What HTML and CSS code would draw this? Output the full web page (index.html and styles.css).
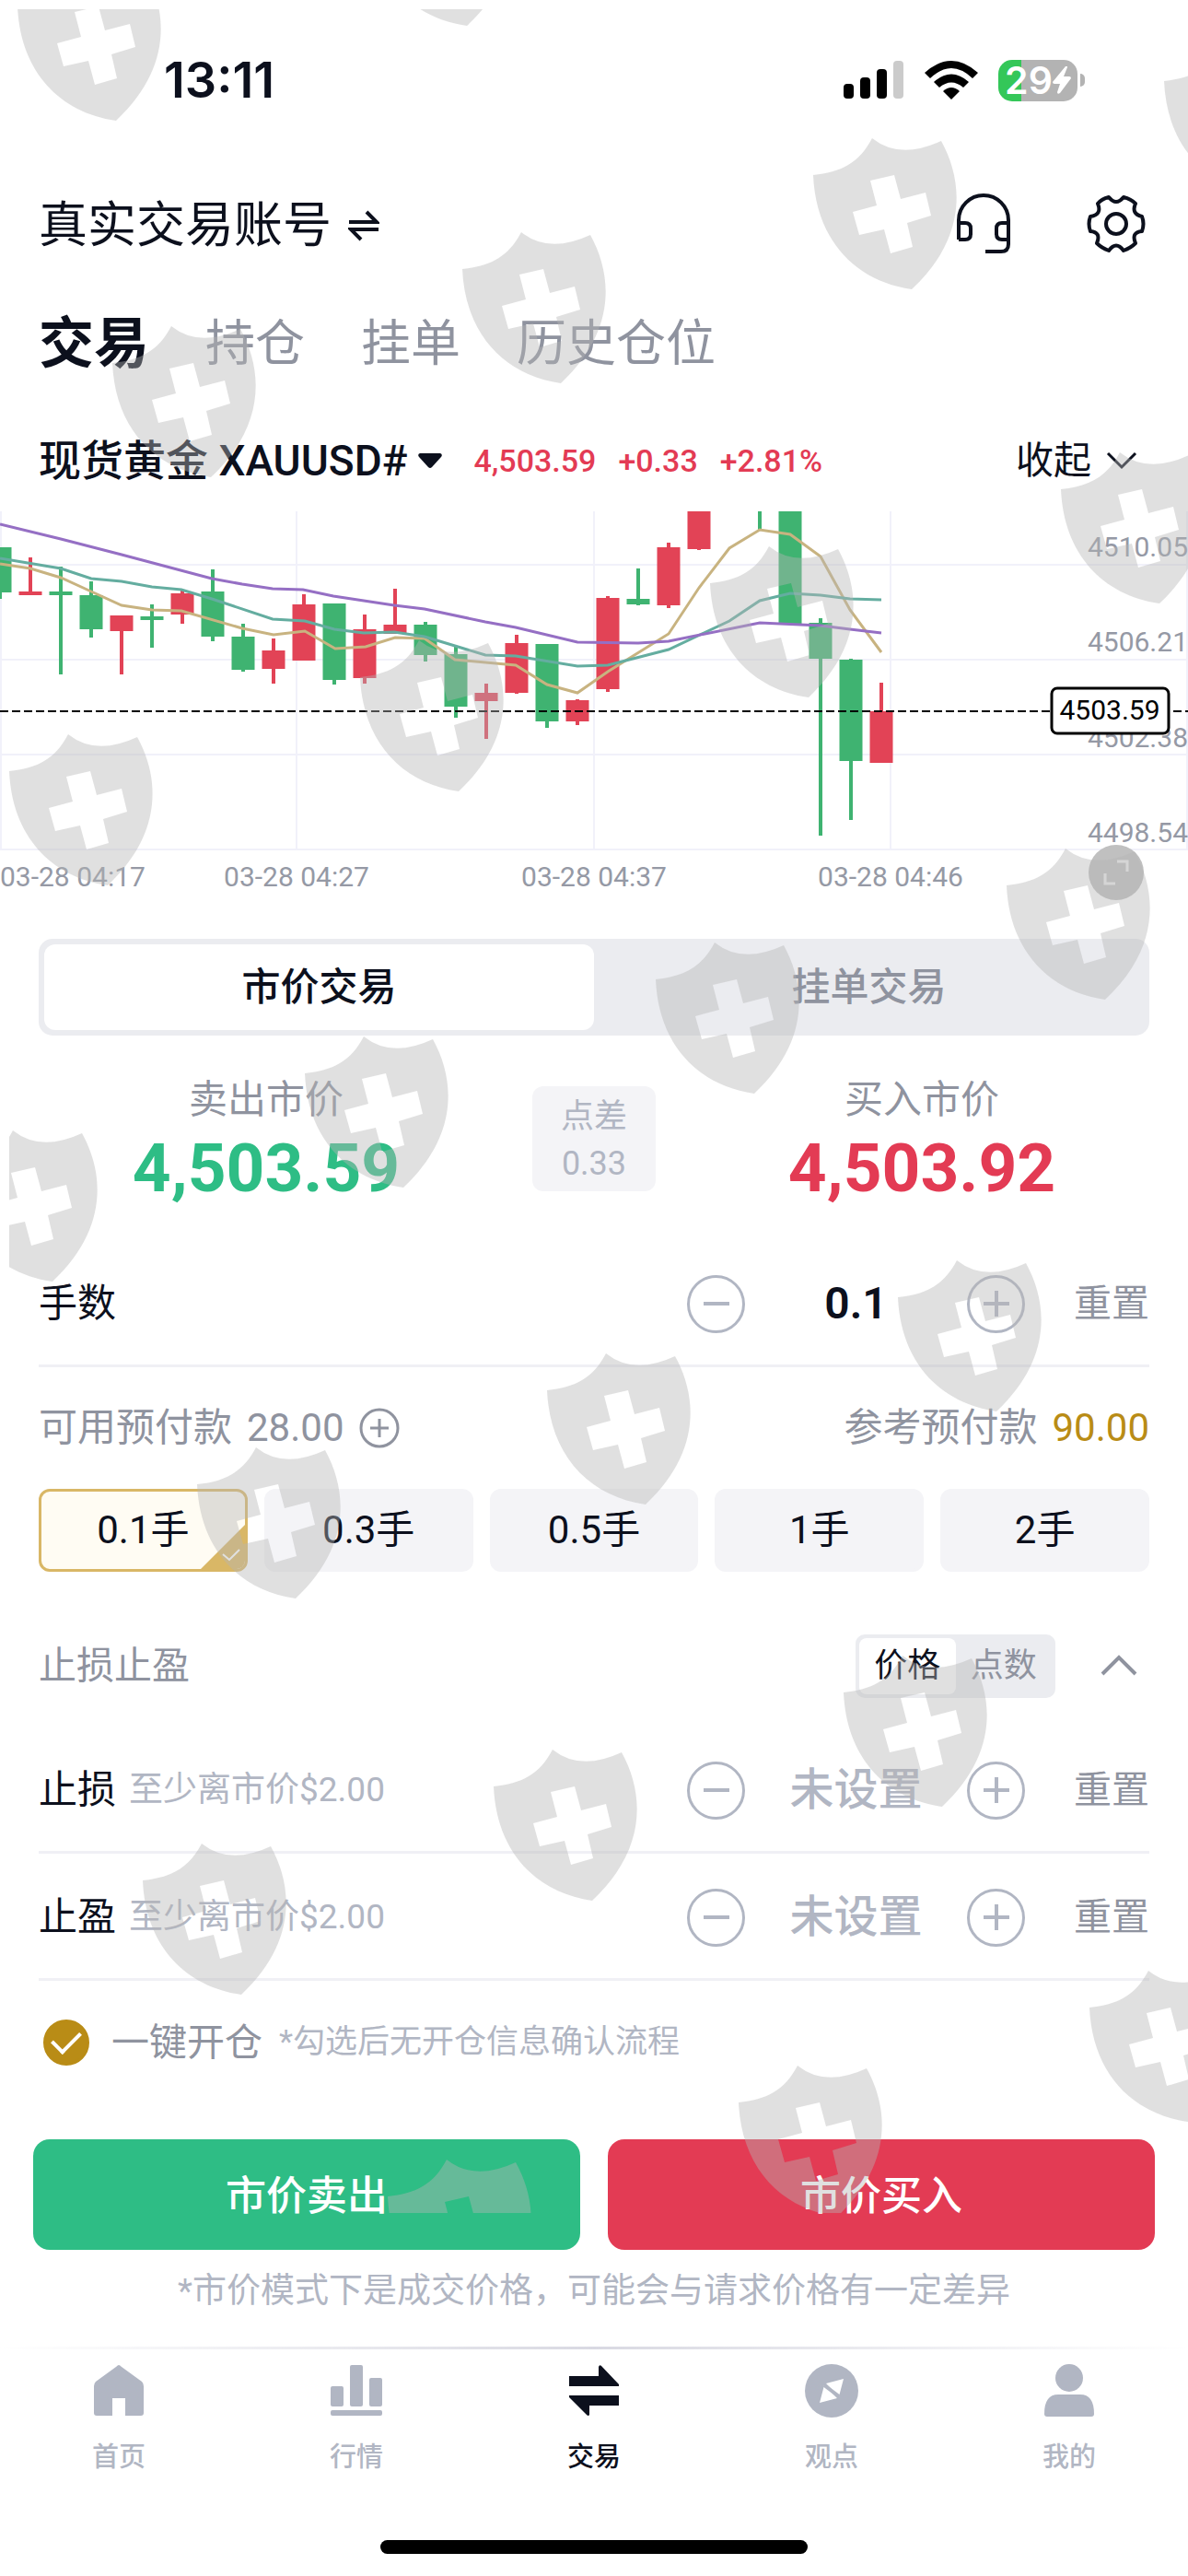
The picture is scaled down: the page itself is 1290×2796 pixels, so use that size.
FILE: index.html
```html
<!DOCTYPE html>
<html lang="zh-CN">
<head>
  <meta charset="UTF-8">
  <meta name="viewport" content="width=device-width, initial-scale=1">
  <title>交易</title>
  <link rel="stylesheet" href="styles.css">
</head>
<body>
  <div class="app">
    <div class="status-bar">
      <span class="time">13:11</span>
      <div class="status-icons">
        <svg width="66" height="42" viewBox="0 0 66 42">
          <rect x="0" y="25" width="11" height="16" rx="4" />
          <rect x="18" y="18" width="11" height="23" rx="4" />
          <rect x="36" y="9" width="11" height="32" rx="4" />
          <rect x="54" y="0" width="11" height="41" rx="4" fill="#cbcbcb" />
        </svg>
        <svg width="58" height="42" viewBox="0 0 58 42">
          <path d="M29 42 L20 33 Q29 25 38 33 Z" />
          <path d="M10 23 Q29 6 48 23 L42 29 Q29 18 16 29 Z" />
          <path d="M0 13 Q29 -13 58 13 L52 19 Q29 -3 6 19 Z" />
        </svg>
        <div class="battery"><span>29</span><svg width="20" height="30" viewBox="0 0 20 30"><path d="M14 0 L0 17 Q0 19 2 19 H8 L5 28 Q5 31 8 29 L20 13 Q20 11 18 11 H12 L16 1 Q16 -1 14 0 Z" fill="#fff" /></svg></div>
      </div>
    </div>

    <header class="account">
      <button class="account-name">真实交易账号
        <svg width="34" height="34" viewBox="0 0 34 34" fill="none" stroke="currentColor" stroke-width="4">
          <path d="M1 13 H31 L20 2" />
          <path d="M33 21 H3 L14 32" />
        </svg>
      </button>
      <div class="account-tools">
        <button aria-label="客服">
          <svg width="72" height="72" viewBox="0 0 72 72" fill="none" stroke="currentColor" stroke-width="4">
            <path d="M9 53 V32 a27 27 0 0 1 54 0 V58 q0 8 -8 8 H38" />
            <path d="M9 35 h7 q6 0 6 6 v6 q0 6 -6 6 h-7" />
            <path d="M63 35 h-7 q-6 0 -6 6 v6 q0 6 6 6 h7" />
          </svg>
        </button>
        <button aria-label="设置">
          <svg width="72" height="72" viewBox="0 0 72 72" fill="none" stroke="currentColor" stroke-width="4" stroke-linejoin="round">
            <path d="M28 7 Q20 9 16 14 Q21 26 8 28 Q5 36 8 44 Q20 45 15 57 Q20 62 28 65 Q36 54 44 65 Q52 62 57 57 Q52 45 64 44 Q67 36 64 28 Q52 25 57 14 Q52 9 44 7 Q36 17 28 7 Z" />
            <circle cx="36" cy="36" r="11" />
          </svg>
        </button>
      </div>
    </header>

    <nav class="tabs">
      <a href="#trade" class="active">交易</a>
      <a href="#positions">持仓</a>
      <a href="#orders">挂单</a>
      <a href="#history">历史仓位</a>
    </nav>

    <div class="symbol-row">
      <button class="symbol">现货黄金 XAUUSD#
        <svg width="26" height="16" viewBox="0 0 26 16"><path d="M2 0 H24 Q27 1 25 4 L15 15 Q13 17 11 15 L1 4 Q-1 1 2 0 Z" fill="currentColor" /></svg>
      </button>
      <div class="change"><span>4,503.59</span><span>+0.33</span><span>+2.81%</span></div>
      <button class="collapse">收起
        <svg width="36" height="24" viewBox="0 0 36 24" fill="none" stroke="currentColor" stroke-width="3"><path d="M3 4 L18 19 L33 4" /></svg>
      </button>
    </div>

    <div class="chart">
      <svg viewBox="0 0 1290 415">
        <g class="grid">
          <path d="M1 0 V367 M322 0 V367 M645 0 V367 M967 0 V367 M1289 0 V367" />
          <path d="M0 58 H1290 M0 161 H1290 M0 264 H1290 M0 367 H1290" />
        </g>
        <g class="axis">
          <text x="1290" y="49" text-anchor="end">4510.05</text>
          <text x="1290" y="152" text-anchor="end">4506.21</text>
          <text x="1290" y="256" text-anchor="end">4502.38</text>
          <text x="1290" y="359" text-anchor="end">4498.54</text>
          <text x="0" y="407">03-28 04:17</text>
          <text x="322" y="407" text-anchor="middle">03-28 04:27</text>
          <text x="645" y="407" text-anchor="middle">03-28 04:37</text>
          <text x="967" y="407" text-anchor="middle">03-28 04:46</text>
        </g>
        <g class="down">
          <path class="body" d="M0 39 V88 M66 87 V91 M99 91 V128 M165 114 V118 M231 87 V136 M264 136 V172 M363 100 V183 M462 123 V156 M495 155 V212 M594 144 V228 M693 95 V101 M858 0 V122 M891 121 V160 M924 161 V271" />
          <path class="wick" d="M0 39 V95 M66 60 V177 M99 76 V137 M165 101 V148 M231 63 V141 M264 122 V174 M363 100 V188 M462 120 V163 M495 147 V224 M594 144 V235 M693 62 V102 M825 0 V21 M891 116 V352 M924 160 V335" />
        </g>
        <g class="up">
          <path class="body" d="M33 87 V91 M132 113 V130 M198 89 V112 M297 151 V171 M330 101 V162 M396 128 V181 M429 123 V133 M528 197 V206 M561 143 V197 M627 205 V228 M660 94 V193 M726 39 V102 M759 0 V41 M957 217 V273" />
          <path class="wick" d="M33 50 V91 M132 113 V177 M198 85 V122 M297 138 V187 M330 90 V162 M396 112 V187 M429 84 V133 M528 187 V247 M561 134 V198 M627 204 V232 M660 92 V196 M726 34 V105 M759 0 V42 M957 186 V273" />
        </g>
        <g class="lines">
          <polyline stroke="#c8b380" points="0,57 33,62 66,72 99,87 132,102 165,107 197,108 263,127 297,134 331,130 364,149 397,147 429,137 461,138 494,161 560,167 594,188 627,197 660,174 726,133 759,83 792,40 825,20 858,25 891,49 923,107 957,153" />
          <polyline stroke="#64ada0" points="0,51 66,62 99,73 132,76 165,82 197,85 230,95 296,117 331,119 363,128 395,132 428,131 461,136 494,146 527,156 560,157 627,168 660,167 726,150 792,119 825,97 858,89 891,91 923,95 957,96" />
          <polyline stroke="#956fc4" points="0,14 66,30 132,47 230,73 263,79 296,84 329,85 362,92 428,102 461,106 527,120 560,126 627,142 693,143 726,141 825,121 891,124 923,128 957,132" />
        </g>
        <line x1="0" y1="217" x2="1290" y2="217" stroke="#000" stroke-width="2" stroke-dasharray="9 4" />
        <rect x="1142" y="192" width="127" height="49" rx="6" fill="#fff" stroke="#000" stroke-width="3" />
        <text class="price-tag" x="1205" y="226" text-anchor="middle">4503.59</text>
      </svg>
      <button class="expand" aria-label="全屏">
        <svg width="28" height="28" viewBox="0 0 28 28" fill="none" stroke="#ededed" stroke-width="3"><path d="M15 2 H26 V13 M2 15 V26 H13" /></svg>
      </button>
    </div>

    <div class="mode">
      <label><input type="radio" name="mode" checked><span>市价交易</span></label>
      <label><input type="radio" name="mode"><span>挂单交易</span></label>
    </div>

    <div class="quotes">
      <div class="quote sell"><span>卖出市价</span><strong>4,503.59</strong></div>
      <div class="spread"><span>点差</span><span>0.33</span></div>
      <div class="quote buy"><span>买入市价</span><strong>4,503.92</strong></div>
    </div>

    <div class="field lots">
      <label for="lots">手数</label>
      <div class="stepper">
        <button aria-label="减少手数"><svg width="30" height="30" viewBox="0 0 30 30"><path d="M1 15 H29" /></svg></button>
        <input type="text" id="lots" value="0.1">
        <button aria-label="增加手数"><svg width="30" height="30" viewBox="0 0 30 30"><path d="M1 15 H29 M15 1 V29" /></svg></button>
      </div>
      <button class="reset">重置</button>
    </div>

    <div class="margin-row">
      <div class="margin-item"><span>可用预付款</span><span>28.00</span>
        <button aria-label="入金"><svg width="44" height="44" viewBox="0 0 44 44" fill="none" stroke="currentColor" stroke-width="3"><circle cx="22" cy="22" r="20" /><path d="M12 22 H32 M22 12 V32" /></svg></button>
      </div>
      <div class="margin-item"><span>参考预付款</span><span class="gold">90.00</span></div>
    </div>

    <div class="chips">
      <label><input type="radio" name="size" checked><span>0.1手</span>
        <svg class="tick" width="48" height="48" viewBox="0 0 48 48"><path d="M48 0 V48 H0 Z" fill="#d9b766" /><path d="M24 32 L31 38 L42 27" fill="none" stroke="#fff" stroke-width="2" /></svg>
      </label>
      <label><input type="radio" name="size"><span>0.3手</span></label>
      <label><input type="radio" name="size"><span>0.5手</span></label>
      <label><input type="radio" name="size"><span>1手</span></label>
      <label><input type="radio" name="size"><span>2手</span></label>
    </div>

    <div class="stop-header">
      <span>止损止盈</span>
      <div class="unit">
        <label><input type="radio" name="unit" checked><span>价格</span></label>
        <label><input type="radio" name="unit"><span>点数</span></label>
      </div>
      <button aria-label="收起止损止盈"><svg width="42" height="26" viewBox="0 0 42 26" fill="none" stroke="currentColor" stroke-width="4"><path d="M3 22 L21 4 L39 22" /></svg></button>
    </div>

    <div class="field">
      <label for="stopLoss">止损</label>
      <span class="hint">至少离市价$2.00</span>
      <div class="stepper">
        <button aria-label="减少止损"><svg width="30" height="30" viewBox="0 0 30 30"><path d="M1 15 H29" /></svg></button>
        <input type="text" id="stopLoss" placeholder="未设置">
        <button aria-label="增加止损"><svg width="30" height="30" viewBox="0 0 30 30"><path d="M1 15 H29 M15 1 V29" /></svg></button>
      </div>
      <button class="reset">重置</button>
    </div>
    <div class="field">
      <label for="takeProfit">止盈</label>
      <span class="hint">至少离市价$2.00</span>
      <div class="stepper">
        <button aria-label="减少止盈"><svg width="30" height="30" viewBox="0 0 30 30"><path d="M1 15 H29" /></svg></button>
        <input type="text" id="takeProfit" placeholder="未设置">
        <button aria-label="增加止盈"><svg width="30" height="30" viewBox="0 0 30 30"><path d="M1 15 H29 M15 1 V29" /></svg></button>
      </div>
      <button class="reset">重置</button>
    </div>

    <div class="one-click">
      <input type="checkbox" id="oneClick" checked>
      <label for="oneClick">一键开仓</label>
      <span>*勾选后无开仓信息确认流程</span>
    </div>

    <div class="actions">
      <button class="sell-btn">市价卖出</button>
      <button class="buy-btn">市价买入</button>
    </div>
    <p class="note">*市价模式下是成交价格，可能会与请求价格有一定差异</p>

    <nav class="tab-bar">
      <a href="#home">
        <svg width="60" height="60" viewBox="0 0 60 60"><path d="M30 2 Q31 2 33 4 L55 20 Q57 22 57 25 V54 Q57 57 54 57 H37 V38 H23 V57 H6 Q3 57 3 54 V25 Q3 22 5 20 L27 4 Q29 2 30 2 Z" /></svg>
        首页
      </a>
      <a href="#market">
        <svg width="60" height="60" viewBox="0 0 60 60"><rect x="2" y="25" width="14" height="22" rx="2" /><rect x="23" y="2" width="14" height="45" rx="2" /><rect x="44" y="16" width="14" height="31" rx="2" /><rect x="2" y="51" width="56" height="6" rx="2" /></svg>
        行情
      </a>
      <a href="#trade" class="active">
        <svg width="60" height="60" viewBox="0 0 60 60"><path d="M3 14 H35 V4 Q36 1 38 3 L57 23 V25 H3 Z" /><path d="M57 46 H25 V56 Q24 58 22 56 L3 37 V35 H57 Z" /></svg>
        交易
      </a>
      <a href="#insight">
        <svg width="60" height="60" viewBox="0 0 60 60"><circle cx="30" cy="30" r="29" /><path d="M43 17 L38 36 L24 22 Z M17 43 L22 24 L36 38 Z" fill="#fff" /><path d="M22 24 L38 36" stroke="#b1b6c3" stroke-width="4" /></svg>
        观点
      </a>
      <a href="#me">
        <svg width="60" height="60" viewBox="0 0 60 60"><circle cx="30" cy="16" r="15" /><path d="M3 55 Q3 34 18 34 H42 Q57 34 57 55 Q57 58 54 58 H6 Q3 58 3 55 Z" /></svg>
        我的
      </a>
    </nav>
    <div class="home-indicator"></div>

    <svg class="watermark" viewBox="10 10 1280 2392" preserveAspectRatio="xMinYMin slice" aria-hidden="true">
      <defs>
        <path id="shield" fill-rule="evenodd" d="M0 0 C30 -3 50 -13 64 -40 Q94 -16 139 -37 C165 10 165 70 107 124 C45 115 3 70 0 0 Z M62 6 L88 0 L95 26 L122 19 L128 44 L102 52 L108 78 L84 85 L77 59 L50 65 L43 40 L69 33 Z" />
      </defs>
      <use href="#shield" x="19" y="7" />
      <use href="#shield" x="400" y="-96" />
      <use href="#shield" x="1264" y="88" />
      <use href="#shield" x="883" y="190" />
      <use href="#shield" x="502" y="292" />
      <use href="#shield" x="122" y="394" />
      <use href="#shield" x="1152" y="531" />
      <use href="#shield" x="771" y="633" />
      <use href="#shield" x="391" y="735" />
      <use href="#shield" x="10" y="837" />
      <use href="#shield" x="1093" y="961" />
      <use href="#shield" x="712" y="1063" />
      <use href="#shield" x="331" y="1165" />
      <use href="#shield" x="-50" y="1267" />
      <use href="#shield" x="975" y="1408" />
      <use href="#shield" x="594" y="1509" />
      <use href="#shield" x="214" y="1611" />
      <use href="#shield" x="916" y="1837" />
      <use href="#shield" x="536" y="1939" />
      <use href="#shield" x="155" y="2041" />
      <use href="#shield" x="1183" y="2179" />
      <use href="#shield" x="802" y="2282" />
      <use href="#shield" x="421" y="2384" />
    </svg>
  </div>
</body>
</html>
```
FILE: styles.css
```css
:root {
  --text: #0c101d;
  --muted: #8f939f;
  --light: #b1b6c3;
  --line: #f0f0f5;
  --fill: #f4f4f7;
  --segment: #ebecf0;
  --green: #2ebd85;
  --red: #e33b54;
  --gold: #b98c16;
}

* {
  box-sizing: border-box;
}

body {
  margin: 0;
  background: #fff;
  color: var(--text);
  font-family: Roboto, "Noto Sans CJK SC", sans-serif;
  font-size: 42px;
  line-height: 54px;
}

button,
input {
  font: inherit;
  color: inherit;
  border: none;
  background: none;
  padding: 0;
  margin: 0;
}

button {
  cursor: pointer;
}

a {
  color: inherit;
  text-decoration: none;
}

svg {
  display: block;
}

.app {
  position: relative;
  overflow: hidden;
}

/* Status bar */
.status-bar {
  display: flex;
  align-items: center;
  justify-content: space-between;
  height: 174px;
  padding: 0 112px 0 178px;
}

.time {
  font-family: Inter, sans-serif;
  font-size: 54px;
  font-weight: 600;
}

.status-icons {
  display: flex;
  align-items: center;
  gap: 22px;
}

.battery {
  position: relative;
  display: flex;
  align-items: center;
  justify-content: center;
  width: 86px;
  height: 45px;
  margin-right: 8px;
  border-radius: 15px;
  background: linear-gradient(90deg, #34c759 29%, #b3b3b3 29%);
  color: #fff;
  font-family: Inter, sans-serif;
  font-size: 41px;
  font-weight: 600;
}

.battery::after {
  content: "";
  position: absolute;
  right: -8px;
  width: 5px;
  height: 14px;
  border-radius: 0 5px 5px 0;
  background: #b3b3b3;
}

/* Header */
.account {
  display: flex;
  align-items: center;
  justify-content: space-between;
  height: 138px;
  padding: 0 42px;
}

.account-name {
  display: flex;
  align-items: center;
  gap: 18px;
  padding-top: 3px;
  font-size: 53px;
}

.account-tools {
  display: flex;
  gap: 72px;
}

.tabs {
  display: flex;
  align-items: center;
  gap: 61px;
  height: 122px;
  padding: 2px 42px 0;
  font-size: 54px;
  color: var(--muted);
}

.tabs .active {
  color: var(--text);
  font-size: 60px;
  font-weight: 700;
}

.symbol-row {
  display: flex;
  align-items: center;
  height: 121px;
  padding: 10px 54px 0 42px;
}

.symbol {
  display: flex;
  align-items: center;
  gap: 12px;
  font-size: 46px;
  font-weight: 500;
}

.change {
  display: flex;
  gap: 24px;
  margin-left: 34px;
  color: var(--red);
  font-size: 34px;
  font-weight: 500;
}

.collapse {
  display: flex;
  align-items: center;
  gap: 15px;
  margin-left: auto;
  font-size: 41px;
}

/* Chart */
.chart {
  position: relative;
}

.grid {
  stroke: #f1f1fa;
  stroke-width: 2;
}

.axis {
  fill: #9599a5;
  font-size: 30px;
}

.price-tag {
  fill: #000;
  font-size: 30px;
}

.body {
  stroke-width: 25;
}

.wick {
  stroke-width: 4;
}

.down {
  stroke: #3fb371;
}

.up {
  stroke: #e24356;
}

.lines {
  fill: none;
  stroke-width: 3;
}

.expand {
  position: absolute;
  right: 48px;
  bottom: -7px;
  display: flex;
  align-items: center;
  justify-content: center;
  width: 60px;
  height: 60px;
  border-radius: 50%;
  background: #c0c0c0;
}

/* Market / pending switch */
.mode {
  display: flex;
  height: 105px;
  margin: 49px 42px 0;
  padding: 6px;
  border-radius: 15px;
  background: var(--segment);
  color: var(--muted);
  font-weight: 500;
}

.mode label,
.unit label {
  display: flex;
  flex: 1;
  align-items: center;
  justify-content: center;
  border-radius: 12px;
}

.mode input,
.unit input,
.chips input {
  appearance: none;
  width: 0;
  height: 0;
}

.mode label:has(:checked),
.unit label:has(:checked) {
  background: #fff;
  color: var(--text);
}

/* Quotes */
.quotes {
  display: grid;
  grid-template-columns: 1fr 134px 1fr;
  align-items: start;
  padding-top: 43px;
  text-align: center;
}

.quote {
  display: flex;
  flex-direction: column;
  color: var(--muted);
}

.quote strong {
  font-size: 73px;
  font-weight: 700;
  line-height: 94px;
}

.sell strong {
  color: var(--green);
}

.buy strong {
  color: var(--red);
}

.spread {
  display: flex;
  flex-direction: column;
  margin-top: 12px;
  padding: 8px 0 4px;
  border-radius: 12px;
  background: var(--fill);
  color: var(--light);
  font-size: 36px;
  line-height: 51px;
}

/* Number fields */
.field {
  display: flex;
  align-items: center;
  height: 138px;
  margin: 0 42px;
  padding-top: 3px;
  border-bottom: 3px solid var(--line);
}

.lots {
  margin-top: 31px;
}

.hint {
  margin-left: 14px;
  color: var(--light);
  font-size: 37px;
}

.stepper {
  display: flex;
  align-items: center;
  margin-left: auto;
}

.stepper button {
  display: flex;
  align-items: center;
  justify-content: center;
  width: 63px;
  height: 63px;
  border: 3px solid var(--light);
  border-radius: 50%;
}

.stepper path {
  stroke: var(--light);
  stroke-width: 4;
}

.stepper input {
  width: 241px;
  font-size: 48px;
  font-weight: 600;
  text-align: center;
}

.stepper input::placeholder {
  color: var(--light);
  font-weight: 500;
}

.reset {
  margin-left: 53px;
  color: var(--muted);
  font-size: 41px;
}

.margin-row {
  display: flex;
  align-items: center;
  justify-content: space-between;
  height: 132px;
  padding: 0 42px;
  color: var(--muted);
}

.margin-item {
  display: flex;
  align-items: center;
  gap: 16px;
}

.gold {
  color: var(--gold);
}

.chips {
  display: grid;
  grid-template-columns: repeat(5, 1fr);
  gap: 18px;
  padding: 0 42px;
}

.chips label {
  position: relative;
  display: flex;
  align-items: center;
  justify-content: center;
  height: 90px;
  overflow: hidden;
  border: 3px solid var(--fill);
  border-radius: 12px;
  background: var(--fill);
}

.chips label:has(:checked) {
  border-color: #d9b766;
  background: #fffcf3;
}

.tick {
  position: absolute;
  right: 0;
  bottom: 0;
}

/* Stop loss / take profit */
.stop-header {
  display: flex;
  align-items: center;
  height: 168px;
  padding: 36px 54px 0 42px;
  color: var(--muted);
  font-size: 41px;
}

.unit {
  display: flex;
  width: 217px;
  height: 69px;
  margin-left: auto;
  margin-right: 48px;
  padding: 4px;
  border-radius: 10px;
  background: var(--segment);
  font-size: 36px;
}

.unit label {
  border-radius: 8px;
}

.one-click {
  display: flex;
  align-items: center;
  height: 132px;
  padding: 2px 47px 0;
  color: var(--muted);
  font-size: 41px;
}

.one-click input {
  appearance: none;
  display: flex;
  align-items: center;
  justify-content: center;
  width: 50px;
  height: 50px;
  margin-right: 24px;
  border: 3px solid var(--light);
  border-radius: 50%;
}

.one-click input:checked {
  border-color: var(--gold);
  background: var(--gold);
}

.one-click input:checked::after {
  content: "";
  width: 26px;
  height: 14px;
  margin-bottom: 8px;
  border: solid #fff;
  border-width: 0 0 4px 4px;
  transform: rotate(-45deg);
}

.one-click span {
  margin-left: 18px;
  color: var(--light);
  font-size: 35px;
}

/* Order buttons */
.actions {
  display: flex;
  gap: 30px;
  margin-top: 40px;
  padding: 0 36px;
}

.actions button {
  flex: 1;
  height: 120px;
  padding-top: 3px;
  border-radius: 18px;
  color: #fff;
  font-size: 44px;
  font-weight: 500;
}

.sell-btn {
  background: var(--green);
}

.buy-btn {
  background: var(--red);
}

.note {
  margin: 0 0 15px;
  color: var(--light);
  font-size: 37px;
  line-height: 90px;
  text-align: center;
}

/* Bottom navigation */
.tab-bar {
  display: grid;
  grid-template-columns: repeat(5, 1fr);
  padding-top: 18px;
  background: linear-gradient(90deg, #fff, #d9d9e2, #fff) top / 100% 3px no-repeat;
  color: var(--light);
  font-size: 29px;
  font-weight: 500;
  line-height: 44px;
}

.tab-bar a {
  display: flex;
  flex-direction: column;
  align-items: center;
  gap: 20px;
}

.tab-bar svg {
  fill: currentColor;
}

.tab-bar .active {
  color: var(--text);
}

.home-indicator {
  width: 36%;
  height: 15px;
  margin: 68px auto 24px;
  border-radius: 8px;
  background: #000;
}

.watermark {
  position: absolute;
  top: 10px;
  left: 10px;
  width: calc(100% - 10px);
  height: calc(100% - 404px);
  fill: rgba(180, 180, 180, 0.42);
  pointer-events: none;
}
```
